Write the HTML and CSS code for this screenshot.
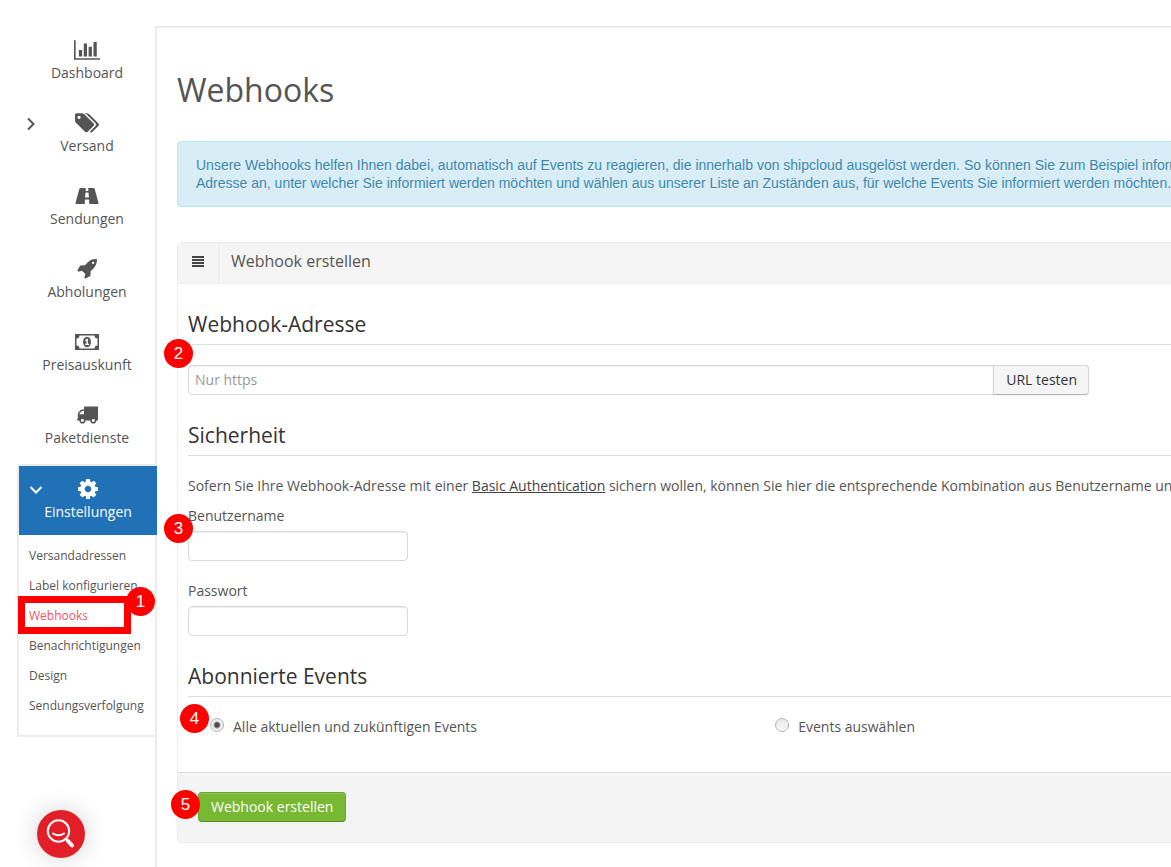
FILE: index.html
```html
<!DOCTYPE html>
<html lang="de">
<head>
<meta charset="utf-8">
<title>Webhooks</title>
<link rel="stylesheet" href="styles.css">
</head>
<body>
<div class="app">
  <nav class="sidebar">
    <ul class="nav">
      <li class="nav-item"><a class="nav-link" href="#">
        <svg class="icon" width="26" height="20" viewBox="0 128 2048 1536"><path d="M640 896v512h-256v-512h256zm384-512v1024h-256v-1024h256zm1024 1152v128h-2048v-1536h128v1408h1920zm-640-896v768h-256v-768h256zm384-384v1152h-256v-1152h256z"/></svg>
        <span>Dashboard</span></a></li>
      <li class="nav-item"><a class="nav-link" href="#">
        <svg class="chevron" width="8" height="14" viewBox="0 0 8 14"><path d="M1 1.500 6.500 7 1 12.500"/></svg>
        <svg class="icon" width="24" height="20" viewBox="0 128 1899 1536"><path d="M448 448q0-53-37.500-90.500t-90.500-37.500-90.500 37.500-37.500 90.500 37.500 90.500 90.500 37.500 90.500-37.500 37.500-90.500zm1067 576q0 53-37 90l-491 492q-39 37-91 37-53 0-90-37l-715-716q-38-37-64.500-101t-26.500-117v-416q0-52 38-90t90-38h416q53 0 117 26.500t102 64.500l715 714q37 39 37 91zm384 0q0 53-37 90l-491 492q-39 37-91 37-36 0-59-14t-53-45l470-470q37-37 37-90 0-52-37-91l-715-714q-38-38-102-64.500t-117-26.500h224q53 0 117 26.500t102 64.500l715 714q37 39 37 91z"/></svg>
        <span>Versand</span></a></li>
      <li class="nav-item"><a class="nav-link" href="#">
        <svg class="icon" width="24" height="20" viewBox="0 0 24 20"><path fill-rule="evenodd" d="M5.500 2H10.800L10.600 5H13.400L13.200 2H18.500Q19.300 2 19.600 2.800L23.400 16.500Q23.700 18 22.600 18H14.300L14 13.500H10L9.700 18H1.400Q.3 18 .6 16.500L4.400 2.800Q4.700 2 5.500 2ZM10.500 6.500 10.100 11.500H13.900L13.500 6.500Z"/></svg>
        <span>Sendungen</span></a></li>
      <li class="nav-item"><a class="nav-link" href="#">
        <svg class="icon" width="20" height="20" viewBox="0 128 1664 1664"><path d="M1440 448q0-40-28-68t-68-28-68 28-28 68 28 68 68 28 68-28 28-68zm224-288q0 249-75.500 430.500t-253.500 360.500q-81 80-195 176l-20 379q-2 16-16 26l-384 224q-7 4-16 4-12 0-23-9l-64-64q-13-14-8-32l85-276-281-281-276 85q-3 1-9 1-14 0-23-9l-64-64q-17-19-5-39l224-384q10-14 26-16l379-20q96-114 176-195 188-187 358-258t431-71q14 0 24 9.500t10 22.500z"/></svg>
        <span>Abholungen</span></a></li>
      <li class="nav-item"><a class="nav-link" href="#">
        <svg class="icon" width="24" height="20" viewBox="0 0 24 20"><path fill-rule="evenodd" d="M0 2H24V18H0ZM4.500 3.500A3 3 0 0 1 1.500 6.500V13.500A3 3 0 0 1 4.500 16.500H19.500A3 3 0 0 1 22.500 13.500V6.500A3 3 0 0 1 19.500 3.500Z"/><ellipse cx="12" cy="10" rx="4" ry="5.200"/><path class="cutout" d="M10 8.200 11.600 6.700H12.900V11.800H14V13H10.200V11.800H11.400V8.500L10.700 9.100Z"/></svg>
        <span>Preisauskunft</span></a></li>
      <li class="nav-item"><a class="nav-link" href="#">
        <svg class="icon" width="21" height="20" viewBox="64 192 1728 1536"><path d="M640 1408q0-52-38-90t-90-38-90 38-38 90 38 90 90 38 90-38 38-90zm-384-512h384v-256h-158q-13 0-22 9l-195 195q-9 9-9 22v30zm1280 512q0-52-38-90t-90-38-90 38-38 90 38 90 90 38 90-38 38-90zm256-1088v1024q0 15-4 26.500t-13.500 18.500-16.500 11.500-23.500 6-22.500 2-25.500 0-22.500-.5q0 106-75 181t-181 75-181-75-75-181h-384q0 106-75 181t-181 75-181-75-75-181h-64q-3 0-22.500.5t-25.500 0-22.500-2-23.500-6-16.500-11.500-13.500-18.500-4-26.500q0-26 19-45t45-19v-320q0-8-.5-35t0-38 2.500-34.500 6.500-37 14-30.500 22.500-30l198-198q19-19 50.500-32t58.500-13h160v-192q0-26 19-45t45-19h1024q26 0 45 19t19 45z"/></svg>
        <span>Paketdienste</span></a></li>
      <li class="nav-item nav-item-open"><a class="nav-link nav-link-active" href="#">
        <svg class="chevron chevron-down" width="14" height="8" viewBox="0 0 14 8"><path d="M1.500 1 7 6.500 12.500 1"/></svg>
        <svg class="icon" width="20" height="20" viewBox="0 128 1536 1536"><path d="M1024 896q0-106-75-181t-181-75-181 75-75 181 75 181 181 75 181-75 75-181zm512-109v222q0 12-8 23t-20 13l-185 28q-19 54-39 91 35 50 107 138 10 12 10 25t-9 23q-27 37-99 108t-94 71q-12 0-26-9l-138-108q-44 23-91 38-16 136-29 186-7 28-36 28h-222q-14 0-24.500-8.500t-11.500-21.500l-28-184q-49-16-90-37l-141 107q-10 9-25 9-14 0-25-11-126-114-165-168-7-10-7-23 0-12 8-23 15-21 51-66.500t54-70.500q-27-50-41-99l-183-27q-13-2-21-12.500t-8-23.500v-222q0-12 8-23t19-13l186-28q14-46 39-92-40-57-107-138-10-12-10-24 0-10 9-23 26-36 98.500-107.500t94.500-71.500q13 0 26 10l138 107q44-23 91-38 16-136 29-186 7-28 36-28h222q14 0 24.500 8.500t11.500 21.500l28 184q49 16 90 37l142-107q9-9 24-9 13 0 25 10 129 119 165 170 7 8 7 22 0 12-8 23-15 21-51 66.500t-54 70.500q26 50 41 98l183 28q13 2 21 12.500t8 23.500z"/></svg>
        <span>Einstellungen</span></a>
        <ul class="subnav">
          <li><a class="subnav-link" href="#">Versandadressen</a></li>
          <li><a class="subnav-link" href="#">Label konfigurieren</a></li>
          <li class="subnav-current"><a class="subnav-link" href="#">Webhooks</a><span class="frame"></span><span class="badge badge-nav">1</span></li>
          <li><a class="subnav-link" href="#">Benachrichtigungen</a></li>
          <li><a class="subnav-link" href="#">Design</a></li>
          <li><a class="subnav-link" href="#">Sendungsverfolgung</a></li>
        </ul>
      </li>
    </ul>
  </nav>

  <main class="content">
    <h1 class="page-title">Webhooks</h1>
    <p class="alert">Unsere Webhooks helfen Ihnen dabei, automatisch auf Events zu reagieren, die innerhalb von shipcloud ausgelöst werden. So können Sie zum Beispiel inform<br>Adresse an, unter welcher Sie informiert werden möchten und wählen aus unserer Liste an Zuständen aus, für welche Events Sie informiert werden möchten.</p>

    <form class="panel">
      <header class="panel-header">
        <span class="panel-icon"><svg width="12" height="12" viewBox="0 0 12 12"><path d="M0 0H12V2H0ZM0 3H12V5H0ZM0 6H12V8H0ZM0 9H12V11H0Z"/></svg></span>
        <h2 class="panel-title">Webhook erstellen</h2>
      </header>
      <div class="panel-body">
        <section class="section">
          <h3 class="legend">Webhook-Adresse</h3>
          <div class="url-group">
            <input class="field url-field" type="text" placeholder="Nur https" aria-label="Webhook-Adresse">
            <button class="btn btn-append" type="button">URL testen</button>
            <span class="badge badge-field">2</span>
          </div>
        </section>
        <section class="section">
          <h3 class="legend">Sicherheit</h3>
          <p class="hint">Sofern Sie Ihre Webhook-Adresse mit einer <a class="hint-link" href="#">Basic Authentication</a> sichern wollen, können Sie hier die entsprechende Kombination aus Benutzername un</p>
          <div class="control">
            <label for="user">Benutzername</label>
            <input class="field" id="user" type="text">
            <span class="badge badge-control">3</span>
          </div>
          <div class="control">
            <label for="pass">Passwort</label>
            <input class="field" id="pass" type="password">
          </div>
        </section>
        <section class="section">
          <h3 class="legend">Abonnierte Events</h3>
          <div class="choices">
            <label class="choice"><input class="radio" type="radio" name="events" checked>Alle aktuellen und zukünftigen Events<span class="badge badge-choice">4</span></label>
            <label class="choice"><input class="radio" type="radio" name="events">Events auswählen</label>
          </div>
        </section>
      </div>
      <footer class="panel-footer">
        <button class="btn btn-primary" type="button">Webhook erstellen</button>
        <span class="badge badge-submit">5</span>
      </footer>
    </form>
  </main>
</div>
<button class="help" type="button" aria-label="Hilfe">
  <svg width="32" height="32" viewBox="0 0 32 32"><circle cx="13.500" cy="13" r="10.700"/><path d="M8 15.500Q13.500 19 19 15.500"/><path d="M21 21 23 23"/><path class="handle" d="M23 23 27 27.500"/></svg>
</button>
</body>
</html>
```
FILE: styles.css
```css
* { box-sizing: border-box; }

body {
  margin: 0;
  background: #fff;
  color: #555;
  font: 14px/20px "Open Sans", "Noto Sans", sans-serif;
}

h1, h2, h3, p, ul { margin: 0; padding: 0; font-weight: 400; }
ul { list-style: none; }
input, button { font: inherit; }

.app {
  display: flex;
  min-height: 100vh;
  padding-top: 26px;
}

/* Sidebar */
.sidebar {
  flex: none;
  width: 157px;
  margin-right: -2px;
  padding-left: 17px;
  z-index: 1;
}

.nav-item {
  border: 2px solid transparent;
  border-right: 0;
}

.nav-item-open { border-color: #ececec; }

.nav-link {
  position: relative;
  display: flex;
  flex-direction: column;
  align-items: center;
  gap: 3px;
  height: 69px;
  padding: 12px 2px 0 0;
  color: #555;
  text-decoration: none;
}

.nav-link-active {
  padding: 13px 0 0;
  background: #2171b7;
  color: #fff;
}

.icon { fill: currentColor; }
.cutout { fill: #fff; }

.chevron {
  position: absolute;
  left: 8px;
  top: 16px;
  fill: none;
  stroke: currentColor;
  stroke-width: 2;
}

.chevron-down {
  left: 10px;
  top: 20px;
}

.subnav {
  padding: 6px 0 14px;
  margin-right: 2px;
  font-size: 12px;
}

.subnav-link {
  display: block;
  padding: 5px 10px;
  color: #555;
  text-decoration: none;
  white-space: nowrap;
}

.subnav-current { position: relative; }
.subnav-current .subnav-link { color: #f0555c; }

.frame {
  position: absolute;
  left: -1px;
  top: -5px;
  width: 113px;
  height: 38px;
  border: 7px solid #f00;
}

/* Numbered markers */
.badge {
  position: absolute;
  width: 29px;
  height: 29px;
  border-radius: 50%;
  background: #f00;
  color: #fff;
  font: 17px/29px "Liberation Sans", Arial, sans-serif;
  text-align: center;
}

.badge-nav { left: 107px; top: -14px; }
.badge-field { left: -24px; top: -26px; }
.badge-control { left: -24px; top: 8px; }
.badge-choice { top: -13px; }
.badge-submit { left: -7px; top: 17px; }

/* Content */
.content {
  flex: 1;
  min-width: 0;
  padding: 38px 0 24px 20px;
  border: 2px solid #ececec;
  border-width: 2px 0 0 2px;
}

.page-title {
  margin-bottom: 27px;
  font-size: 32px;
  line-height: 48px;
}

.alert {
  margin-bottom: 35px;
  padding: 14px 0 14px 18px;
  overflow: hidden;
  border: 1px solid #bce8f1;
  border-right: 0;
  border-radius: 4px 0 0 4px;
  background: #d9edf7;
  color: #3a87ad;
  font: 14px/18px "Liberation Sans", Arial, sans-serif;
  text-shadow: 0 1px 0 rgba(255, 255, 255, .5);
  white-space: nowrap;
}

.panel {
  border: 1px solid #ececec;
  border-right: 0;
  border-radius: 5px 0 0 5px;
}

.panel-header {
  display: flex;
  height: 41px;
  border-bottom: 1px solid #ececec;
  border-top-left-radius: 4px;
  background: #f5f5f5;
}

.panel-icon {
  display: flex;
  align-items: center;
  justify-content: center;
  width: 42px;
  padding: 0 2px 2px 0;
  border-right: 1px solid #e5e5e5;
  box-shadow: 1px 0 0 #fff;
  fill: #444;
}

.panel-title {
  padding-left: 11px;
  font-size: 16px;
  line-height: 36px;
}

.panel-body { padding: 20px 0 35px 10px; }
.section + .section { margin-top: 20px; }

.legend {
  margin-bottom: 20px;
  border-bottom: 1px solid #e0e0e0;
  color: #333;
  font-size: 21px;
  line-height: 40px;
}

.field {
  display: block;
  width: 220px;
  height: 30px;
  padding: 3px 6px 5px;
  border: 1px solid #d9d9d9;
  border-radius: 4px;
  background: #fff;
  box-shadow: inset 0 1px 1px rgba(0, 0, 0, .075);
  color: #555;
}

.field::placeholder { color: #999; opacity: 1; }

.url-group {
  position: relative;
  display: flex;
  margin-right: 82px;
}

.url-field {
  flex: 1;
  border-radius: 4px 0 0 4px;
}

.btn {
  height: 30px;
  padding: 0 12px;
  border: 1px solid #d5d5d5;
  border-bottom-color: #b3b3b3;
  border-radius: 4px;
  background: #f5f5f5;
  box-shadow: 0 1px 2px rgba(0, 0, 0, .05);
  color: #333;
  line-height: 20px;
}

.btn-append {
  margin-left: -1px;
  padding-right: 11px;
  border-radius: 0 4px 4px 0;
}

.btn-primary {
  border-color: #69a52b;
  border-bottom-color: #568b20;
  background: #78b833;
  box-shadow: inset 0 1px 0 #8cc653;
  color: #fff;
}

.hint {
  margin-bottom: 10px;
  overflow: hidden;
  white-space: nowrap;
}

.hint-link { color: #444; }

.control {
  position: relative;
  display: grid;
  gap: 5px;
}

.control + .control { margin-top: 20px; }

.choices {
  display: grid;
  grid-template-columns: 23fr 17fr;
}

.choice {
  position: relative;
  display: flex;
  gap: 9px;
  margin-left: 22px;
}

.choice .badge { left: -30px; }

.radio {
  appearance: none;
  width: 14px;
  height: 14px;
  margin: 1px 0 0;
  border: 1px solid #b5b5b5;
  border-radius: 50%;
  background: linear-gradient(#e8e8e8, #f8f8f8);
}

.radio:checked {
  background: radial-gradient(circle, #4a4a4a 2px, #eee 4px);
}

.panel-footer {
  position: relative;
  padding: 19px 20px 20px;
  border-top: 1px solid #e0e0e0;
  border-bottom-left-radius: 4px;
  background: #f4f4f4;
}

/* Floating help button */
.help {
  position: fixed;
  left: 37px;
  bottom: 9px;
  z-index: 2;
  display: flex;
  align-items: center;
  justify-content: center;
  width: 48px;
  height: 48px;
  padding: 0;
  border: 0;
  border-radius: 50%;
  background: #e21f29;
  box-shadow: 0 0 24px rgba(0, 0, 0, .18);
  fill: none;
  stroke: #fff;
  stroke-width: 2;
  stroke-linecap: round;
}

.help .handle { stroke-width: 4; }
```
